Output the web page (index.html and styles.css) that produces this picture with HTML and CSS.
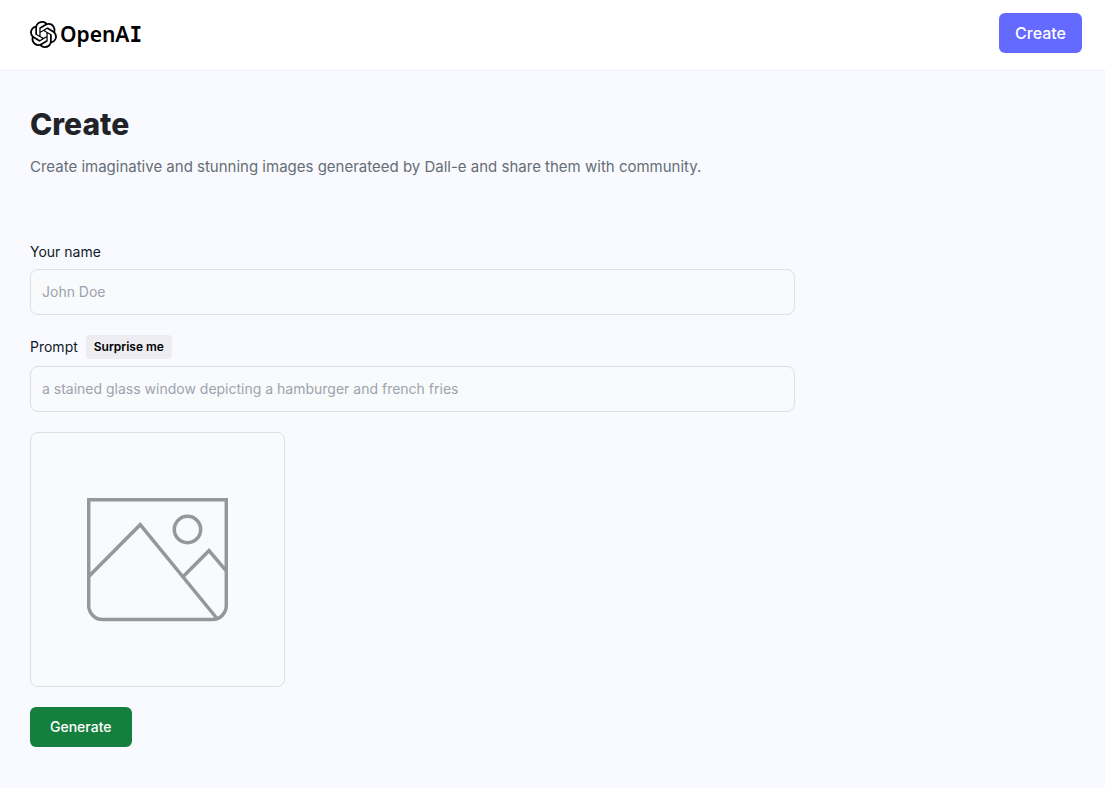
FILE: index.html
```html
<!DOCTYPE html>
<html lang="en">
<head>
<meta charset="utf-8">
<meta name="viewport" content="width=device-width, initial-scale=1">
<title>Create</title>
<link rel="stylesheet" href="styles.css">
</head>
<body>
<header class="header">
  <a class="logo" href="#">
    <svg class="logo-mark" viewBox="0 0 24 24" aria-hidden="true"><path d="M22.2819 9.8211a5.9847 5.9847 0 0 0-.5157-4.9108 6.0462 6.0462 0 0 0-6.5098-2.9A6.0651 6.0651 0 0 0 4.9807 4.1818a5.9847 5.9847 0 0 0-3.9977 2.9 6.0462 6.0462 0 0 0 .7427 7.0966 5.98 5.98 0 0 0 .511 4.9107 6.051 6.051 0 0 0 6.5146 2.9001A5.9847 5.9847 0 0 0 13.2599 24a6.0557 6.0557 0 0 0 5.7718-4.2058 5.9894 5.9894 0 0 0 3.9977-2.9001 6.0557 6.0557 0 0 0-.7475-7.0729zm-9.022 12.6081a4.4755 4.4755 0 0 1-2.8764-1.0408l.1419-.0804 4.7783-2.7582a.7948.7948 0 0 0 .3927-.6813v-6.7369l2.02 1.1686a.071.071 0 0 1 .038.052v5.5826a4.504 4.504 0 0 1-4.4945 4.4944zm-9.6607-4.1254a4.4708 4.4708 0 0 1-.5346-3.0137l.142.0852 4.783 2.7582a.7712.7712 0 0 0 .7806 0l5.8428-3.3685v2.3324a.0804.0804 0 0 1-.0332.0615L9.74 19.9502a4.4992 4.4992 0 0 1-6.1408-1.6464zM2.3408 7.8956a4.485 4.485 0 0 1 2.3655-1.9728V11.6a.7664.7664 0 0 0 .3879.6765l5.8144 3.3543-2.0201 1.1685a.0757.0757 0 0 1-.071 0l-4.8303-2.7865A4.504 4.504 0 0 1 2.3408 7.872zm16.5963 3.8558L13.1038 8.364 15.1192 7.2a.0757.0757 0 0 1 .071 0l4.8303 2.7913a4.4944 4.4944 0 0 1-.6765 8.1042v-5.6772a.79.79 0 0 0-.407-.667zm2.0107-3.0231l-.142-.0852-4.7735-2.7818a.7759.7759 0 0 0-.7854 0L9.409 9.2297V6.8974a.0662.0662 0 0 1 .0284-.0615l4.8303-2.7866a4.4992 4.4992 0 0 1 6.6802 4.66zM8.3065 12.863l-2.02-1.1638a.0804.0804 0 0 1-.038-.0567V6.0742a4.4992 4.4992 0 0 1 7.3757-3.4537l-.142.0805L8.704 5.459a.7948.7948 0 0 0-.3927.6813zm1.0976-2.3654l2.602-1.4998 2.6069 1.4998v2.9994l-2.5974 1.4997-2.6067-1.4997Z"/></svg>
    <span class="logo-text">OpenA<span class="logo-slab">I</span></span>
  </a>
  <a class="create-link" href="#">Create</a>
</header>
<main class="main">
  <h1 class="title">Create</h1>
  <p class="intro">Create imaginative and stunning images generateed by Dall-e and share them with community.</p>
  <form class="form">
    <div class="field">
      <div class="label-row"><label for="name">Your name</label></div>
      <input class="input" id="name" type="text" placeholder="John Doe">
    </div>
    <div class="field">
      <div class="label-row label-row-action">
        <label for="prompt">Prompt</label>
        <button class="surprise" type="button">Surprise me</button>
      </div>
      <input class="input" id="prompt" type="text" placeholder="a stained glass window depicting a hamburger and french fries">
    </div>
    <div class="preview">
      <svg class="preview-icon" viewBox="0 0 141 124" role="img" aria-label="Preview">
        <path d="M1.7 1.7H139.3V107.500A14 14 0 0 1 125.3 121.500H15.7A14 14 0 0 1 1.7 107.500ZM2 78.300 53.2 26.700 130 120.500M96 78.700 122 52.700 139 72.700"/>
        <circle cx="100.500" cy="31.500" r="13.200"/>
      </svg>
    </div>
    <button class="generate" type="submit">Generate</button>
  </form>
</main>
</body>
</html>
```
FILE: styles.css
```css
* {
  box-sizing: border-box;
}

body {
  margin: 0;
  min-height: 100vh;
  background: #f9faff;
  color: #222328;
  font-family: Inter, "Liberation Sans", sans-serif;
  font-size: 14px;
  line-height: 20px;
}

.header {
  display: flex;
  justify-content: space-between;
  align-items: flex-end;
  padding: 13px 23px 17px 30px;
  background: #fff;
  border-bottom: 1px solid #eceff6;
}

.logo {
  display: flex;
  align-items: center;
  gap: 3px;
  padding-bottom: 5px;
  color: #000;
  text-decoration: none;
}

.logo-mark {
  width: 27px;
  height: 27px;
}

.logo-text {
  font-family: "Noto Sans", sans-serif;
  font-size: 21px;
  font-weight: 600;
  line-height: 28px;
}

.logo-slab {
  font-family: "DejaVu Sans Mono", monospace;
  line-height: 1;
}

.create-link {
  padding: 8px 16px;
  border-radius: 6px;
  background: #6469ff;
  color: #fff;
  font-size: 16px;
  font-weight: 500;
  line-height: 24px;
  text-decoration: none;
}

.main {
  padding: 35px 30px 40px;
}

.title {
  margin: 0;
  font-size: 30px;
  font-weight: 800;
  line-height: 36px;
}

.intro {
  margin: 13px 0 0;
  color: #666e75;
  font-size: 15px;
  line-height: 24px;
}

.form {
  display: flex;
  flex-direction: column;
  align-items: flex-start;
  gap: 20px;
  max-width: 765px;
  margin-top: 63px;
}

.field {
  width: 100%;
}

.label-row {
  display: flex;
  align-items: center;
  gap: 8px;
  margin-bottom: 7px;
  color: #111827;
}

.label-row-action {
  min-height: 24px;
}

.surprise {
  padding: 4px 8px;
  border: 0;
  border-radius: 4px;
  background: #ececf1;
  color: #000;
  font: 600 12px/16px Inter, "Liberation Sans", sans-serif;
}

.input {
  display: block;
  width: 100%;
  padding: 12px 11px;
  border: 1px solid #dcdfe4;
  border-radius: 8px;
  background: #f9fafb;
  color: #111827;
  font: inherit;
}

.input::placeholder {
  color: #9ca3af;
  opacity: 1;
}

.preview {
  display: flex;
  align-items: center;
  justify-content: center;
  width: 255px;
  aspect-ratio: 1;
  border: 1px solid #dcdfe4;
  border-radius: 8px;
  background: #f9fafb;
}

.preview-icon {
  width: 141px;
  height: 124px;
  fill: none;
  stroke: #969798;
  stroke-width: 3.5;
}

.generate {
  padding: 10px 20px;
  border: 0;
  border-radius: 6px;
  background: #15803d;
  color: #fff;
  font: 500 14px/20px Inter, "Liberation Sans", sans-serif;
}
```
